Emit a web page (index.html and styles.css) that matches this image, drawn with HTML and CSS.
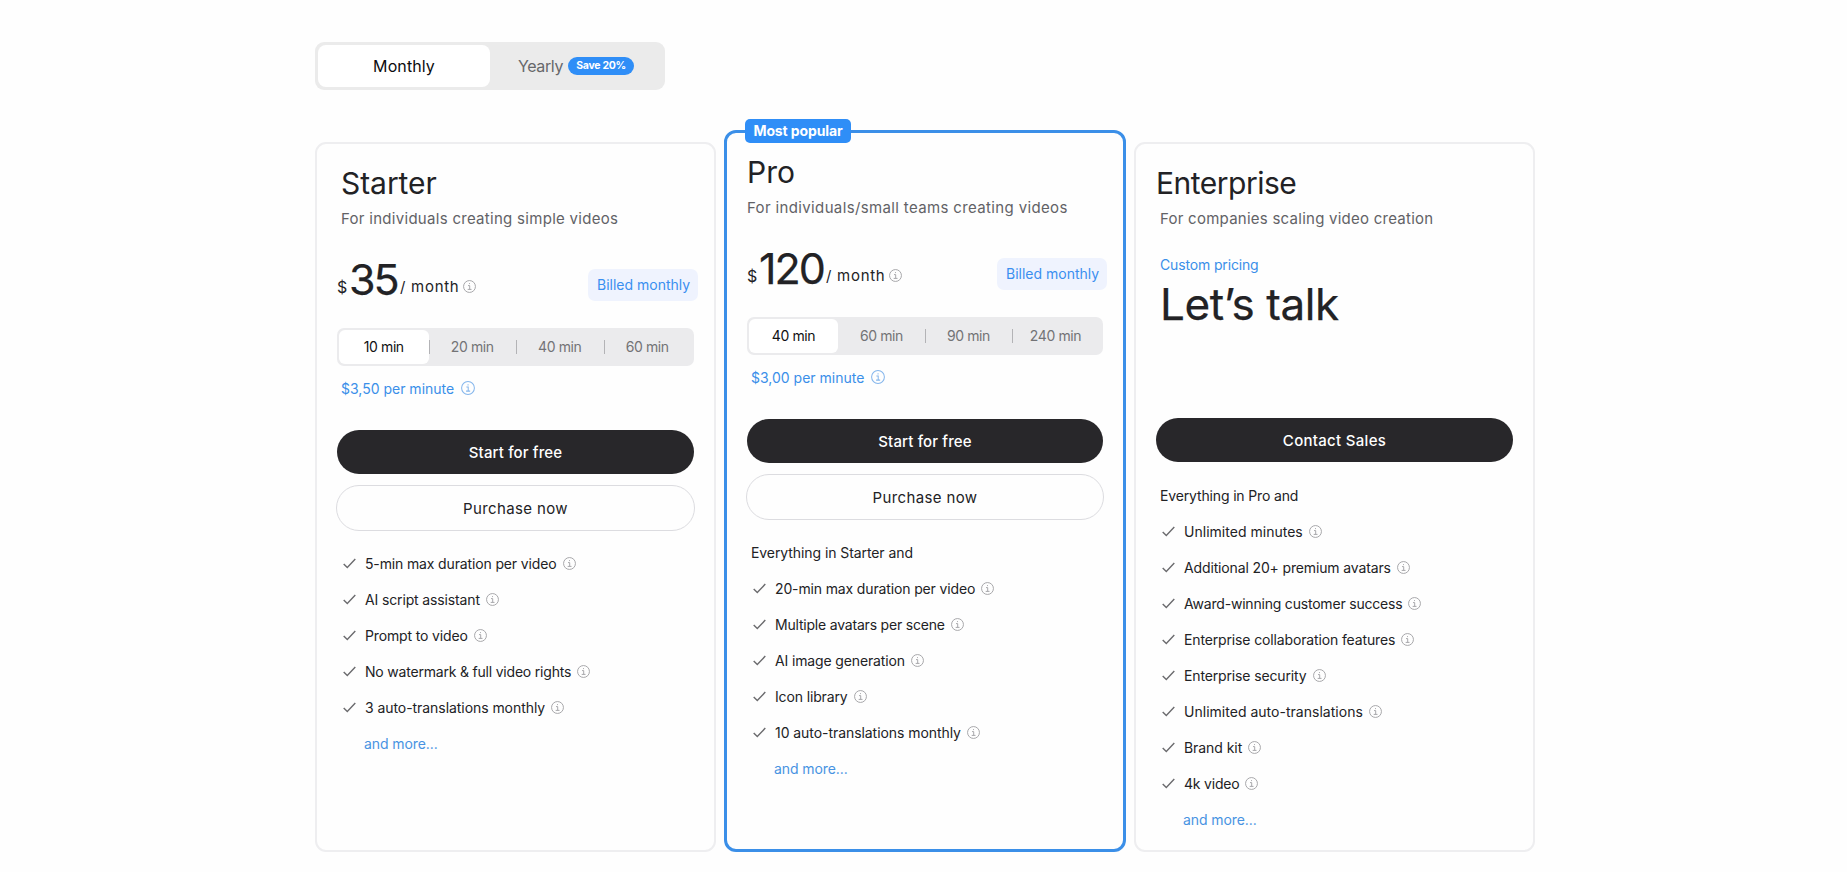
FILE: index.html
```html
<!DOCTYPE html>
<html lang="en">
<head>
<meta charset="utf-8">
<title>Pricing</title>
<link rel="stylesheet" href="styles.css">
</head>
<body>
<svg class="defs" aria-hidden="true">
  <symbol id="info" viewBox="0 0 13 13"><circle cx="6.5" cy="6.5" r="5.95"/><path d="M5 5.6h1.7v3.7M4.7 9.4h3.8"/><path d="M6.1 3.6h.9" stroke-width="1"/></symbol>
  <symbol id="check" viewBox="0 0 13 11"><path d="M.7 5.9 4.3 9.6 12.3 1.1"/></symbol>
</svg>
<main class="page">
  <div class="billing">
    <button class="billing-option is-active">Monthly</button>
    <button class="billing-option"><span class="yearly">Yearly</span><span class="save">Save 20%</span></button>
  </div>

  <div class="plans">
    <section class="plan starter">
      <h2 class="plan-name">Starter</h2>
      <p class="plan-desc">For individuals creating simple videos</p>
      <div class="price-row">
        <span class="currency">$</span><span class="amount">35</span><span class="unit">/ month</span><svg class="info"><use href="#info"/></svg>
        <span class="billed">Billed monthly</span>
      </div>
      <div class="minutes">
        <span class="minute is-active">10 min</span><span class="minute">20 min</span><span class="minute">40 min</span><span class="minute">60 min</span>
      </div>
      <p class="rate">$3,50 per minute<svg class="info"><use href="#info"/></svg></p>
      <button class="btn primary">Start for free</button>
      <button class="btn secondary">Purchase now</button>
      <ul class="features">
        <li><svg class="check"><use href="#check"/></svg>5-min max duration per video<svg class="info"><use href="#info"/></svg></li>
        <li><svg class="check"><use href="#check"/></svg>AI script assistant<svg class="info"><use href="#info"/></svg></li>
        <li><svg class="check"><use href="#check"/></svg>Prompt to video<svg class="info"><use href="#info"/></svg></li>
        <li class="tight"><svg class="check"><use href="#check"/></svg>No watermark &amp; full video rights<svg class="info"><use href="#info"/></svg></li>
        <li class="loose"><svg class="check"><use href="#check"/></svg>3 auto-translations monthly<svg class="info"><use href="#info"/></svg></li>
        <li class="more">and more...</li>
      </ul>
    </section>

    <section class="plan pro">
      <span class="popular">Most popular</span>
      <h2 class="plan-name">Pro</h2>
      <p class="plan-desc">For individuals/small teams creating videos</p>
      <div class="price-row">
        <span class="currency">$</span><span class="amount">120</span><span class="unit">/ month</span><svg class="info"><use href="#info"/></svg>
        <span class="billed">Billed monthly</span>
      </div>
      <div class="minutes">
        <span class="minute is-active">40 min</span><span class="minute">60 min</span><span class="minute">90 min</span><span class="minute">240 min</span>
      </div>
      <p class="rate">$3,00 per minute<svg class="info"><use href="#info"/></svg></p>
      <button class="btn primary">Start for free</button>
      <button class="btn secondary">Purchase now</button>
      <p class="includes">Everything in Starter and</p>
      <ul class="features">
        <li><svg class="check"><use href="#check"/></svg>20-min max duration per video<svg class="info"><use href="#info"/></svg></li>
        <li class="tight"><svg class="check"><use href="#check"/></svg>Multiple avatars per scene<svg class="info"><use href="#info"/></svg></li>
        <li><svg class="check"><use href="#check"/></svg>AI image generation<svg class="info"><use href="#info"/></svg></li>
        <li><svg class="check"><use href="#check"/></svg>Icon library<svg class="info"><use href="#info"/></svg></li>
        <li class="loose"><svg class="check"><use href="#check"/></svg>10 auto-translations monthly<svg class="info"><use href="#info"/></svg></li>
        <li class="more">and more...</li>
      </ul>
    </section>

    <section class="plan enterprise">
      <h2 class="plan-name">Enterprise</h2>
      <p class="plan-desc">For companies scaling video creation</p>
      <p class="custom">Custom pricing</p>
      <p class="talk">Let’s talk</p>
      <button class="btn primary">Contact Sales</button>
      <p class="includes">Everything in Pro and</p>
      <ul class="features">
        <li class="wide"><svg class="check"><use href="#check"/></svg>Unlimited minutes<svg class="info"><use href="#info"/></svg></li>
        <li><svg class="check"><use href="#check"/></svg>Additional 20+ premium avatars<svg class="info"><use href="#info"/></svg></li>
        <li class="tight"><svg class="check"><use href="#check"/></svg>Award-winning customer success<svg class="info"><use href="#info"/></svg></li>
        <li><svg class="check"><use href="#check"/></svg>Enterprise collaboration features<svg class="info"><use href="#info"/></svg></li>
        <li><svg class="check"><use href="#check"/></svg>Enterprise security<svg class="info"><use href="#info"/></svg></li>
        <li class="wide"><svg class="check"><use href="#check"/></svg>Unlimited auto-translations<svg class="info"><use href="#info"/></svg></li>
        <li class="loose"><svg class="check"><use href="#check"/></svg>Brand kit<svg class="info"><use href="#info"/></svg></li>
        <li class="tight"><svg class="check"><use href="#check"/></svg>4k video<svg class="info"><use href="#info"/></svg></li>
        <li class="more">and more...</li>
      </ul>
    </section>
  </div>
</main>
</body>
</html>
```

FILE: styles.css
```css
* { box-sizing: border-box; }
body {
  margin: 0;
  background: #fefefe;
  color: #222225;
  font-family: Inter, "Liberation Sans", sans-serif;
  font-size: 14px;
}
h2, p, ul { margin: 0; padding: 0; font-weight: 400; }
ul { list-style: none; }
button { font: inherit; border: 0; padding: 0; background: none; color: inherit; }
.defs { display: none; }
.page { padding: 42px 0 0 315px; }

/* Billing period switch */
.billing {
  display: flex;
  width: 350px;
  height: 48px;
  padding: 3px;
  border-radius: 9px;
  background: #ebebeb;
}
.billing-option {
  flex: 1;
  display: flex;
  align-items: center;
  justify-content: center;
  gap: 5px;
  border-radius: 8px;
  font-size: 16px;
  color: #67676a;
}
.billing-option.is-active { background: #fff; color: #0c0c0e; letter-spacing: .1px; }
.yearly { letter-spacing: -.35px; }
.save {
  width: 66px;
  height: 18px;
  border-radius: 9px;
  background: #2f8ef7;
  color: #fff;
  font-size: 10.5px;
  font-weight: 700;
  line-height: 18px;
  letter-spacing: -.3px;
  text-align: center;
}

/* Plan cards */
.plans { display: flex; align-items: flex-end; gap: 8px; height: 762px; }
.plan {
  position: relative;
  width: 401px;
  height: 710px;
  padding: 22px 20px 0;
  border: 2px solid #eeeef0;
  border-radius: 11px;
}
.pro {
  width: 402px;
  height: 722px;
  padding-top: 21px;
  border: 3px solid #3b8fe8;
  border-radius: 12px;
}
.popular {
  position: absolute;
  top: -14px;
  left: 18px;
  width: 106px;
  height: 24px;
  border-radius: 5px;
  background: #2f8ef7;
  color: #fff;
  font-weight: 700;
  line-height: 24px;
  letter-spacing: -.12px;
  text-align: center;
}
.plan-name { font-size: 30px; line-height: 36px; }
.starter .plan-name { padding-left: 4px; letter-spacing: -.05px; }
.enterprise .plan-name { letter-spacing: -.5px; }
.enterprise .plan-name, .starter .plan-name { line-height: 35px; margin-bottom: 7px; }
.plan-desc {
  margin-top: 6px;
  padding-left: 4px;
  font-size: 15px;
  line-height: 22px;
  letter-spacing: .29px;
  color: #626266;
  white-space: nowrap;
}
.enterprise .plan-desc { letter-spacing: .25px; }
.pro .plan-desc { margin-top: 7px; padding-left: 0; letter-spacing: .36px; }

.price-row { display: flex; align-items: flex-start; height: 32px; margin-top: 39px; }
.currency { width: 12px; font-size: 16px; line-height: 36px; }
.amount { width: 51px; font-size: 43px; line-height: 20px; letter-spacing: -2px; -webkit-text-stroke: .25px currentColor; }
.pro .amount { width: 67px; letter-spacing: -2px; }
.unit { width: 63px; font-size: 15px; line-height: 36px; letter-spacing: .72px; }
.info { width: 13px; height: 13px; fill: none; stroke: #a3a3a7; stroke-width: .95; }
.price-row .info { margin-top: 11px; }
.billed {
  width: 110px;
  height: 32px;
  margin: 0 -4px 0 auto;
  padding-left: 9px;
  border-radius: 7px;
  background: #eff3fe;
  color: #3a8ff0;
  line-height: 32px;
  white-space: nowrap;
}

.minutes {
  display: flex;
  height: 38px;
  margin-top: 27px;
  padding: 2px;
  border-radius: 7px;
  background: #ebebed;
}
.minute {
  position: relative;
  width: 87.5px;
  line-height: 34px;
  letter-spacing: -.4px;
  text-align: center;
  color: #737376;
}
.minute.is-active { width: 89.5px; border-radius: 6px; background: #fff; color: #111113; }
.pro .minute { width: 87px; }
.pro .minute.is-active { width: 89px; }
.minute + .minute::before {
  content: "";
  position: absolute;
  left: 0;
  top: 10px;
  width: 1px;
  height: 14px;
  background: #b3b3b6;
}
.pro .minute.is-active + .minute::before { display: none; }

.rate {
  display: flex;
  align-items: center;
  gap: 7px;
  height: 20px;
  margin-top: 12px;
  padding-left: 4px;
  color: #3a8fe9;
}
.rate .info { width: 14px; height: 14px; stroke: #85b6ec; }

.btn {
  display: block;
  width: 100%;
  height: 44px;
  border-radius: 22px;
  font-size: 15px;
}
.primary {
  margin-top: 32px;
  background: #28272a;
  color: #fff;
  font-weight: 500;
  letter-spacing: .14px;
}
.enterprise .primary { margin-top: 89px; letter-spacing: .3px; }
.secondary {
  width: calc(100% + 2px);
  height: 46px;
  margin: 11px -1px 0;
  border: 1px solid #dcdce0;
  border-radius: 23px;
  letter-spacing: .38px;
}

.custom { margin-top: 25px; padding-left: 4px; line-height: 20px; letter-spacing: -.15px; color: #3a8fe9; }
.talk { margin-top: 4px; padding-left: 4px; font-size: 44px; line-height: 50px; letter-spacing: -.4px; -webkit-text-stroke: .25px currentColor; }

.includes { margin-top: 15px; padding-left: 4px; line-height: 36px; letter-spacing: -.08px; }
.enterprise .includes { margin-top: 16px; letter-spacing: -.15px; }
.includes + .features { margin-top: -1px; }
.secondary + .features { margin-top: 14px; }
.features li {
  display: flex;
  align-items: center;
  height: 36px;
  padding-left: 6px;
  letter-spacing: -.14px;
  white-space: nowrap;
}
.features .loose { letter-spacing: -.06px; }
.features .wide { letter-spacing: .02px; }
.features .tight { letter-spacing: -.2px; }
.features .more { padding-left: 27px; letter-spacing: -.08px; color: #4893e2; }
.check {
  width: 13px;
  height: 11px;
  margin-right: 9px;
  fill: none;
  stroke: #6b6b6e;
  stroke-width: 1.4;
}
.features .info { margin-left: 6px; }
```
